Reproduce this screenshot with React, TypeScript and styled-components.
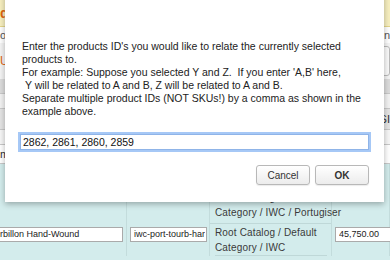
import React from "react";
import styled, { createGlobalStyle } from "styled-components";

const GlobalStyle = createGlobalStyle`
  html, body {
    margin: 0;
    padding: 0;
    background: #d3ecec;
    font-family: "Liberation Sans", Arial, sans-serif;
  }
  body {
    width: 390px;
    height: 260px;
    overflow: hidden;
  }
`;

const Page = styled.div`
  position: relative;
  width: 390px;
  height: 260px;
  overflow: hidden;
`;

const Backdrop = styled.div`
  display: flex;
  flex-direction: column;
`;

const Notice = styled.div`
  height: 26px;
  display: flex;
  align-items: center;
  justify-content: space-between;
  background: #f7efbf;
  border-bottom: 1px solid #e3d58a;
  color: #e0670f;
  font-weight: bold;
  font-size: 14px;
`;

const InfoRow = styled.div`
  height: 16px;
  display: flex;
  align-items: center;
  justify-content: space-between;
  background: #fff;
  color: #555;
  font-size: 11px;
`;

const ToolRow = styled.div`
  height: 36px;
  display: flex;
  align-items: center;
  justify-content: space-between;
  background: #f4f4f4;
  color: #e0670f;
  font-size: 12px;
`;

const ToolBox = styled.div`
  width: 30px;
  height: 28px;
  border: 1px solid #bbb;
  border-radius: 3px;
  background: #fafafa;
`;

const Stripe = styled.div<{ $tone: string; $h: number }>`
  height: ${(p) => p.$h}px;
  background: ${(p) => p.$tone};
  border-bottom: 1px solid #c8c8c8;
  display: flex;
  align-items: center;
  justify-content: flex-end;
  font-size: 11px;
  color: #333;
`;

const Grid = styled.div`
  display: grid;
  grid-template-columns: 127px 83px 122px 58px;
  background: #d3ecec;
`;

const Cell = styled.div<{ $pad?: string }>`
  border-right: 1px solid #c3dcdc;
  padding: ${(p) => p.$pad || "3px 4px"};
  font-size: 10px;
  letter-spacing: 0.15px;
  color: #3a3a3a;
  line-height: 15px;
  min-height: 16px;
  white-space: nowrap;
`;

const CellInput = styled.input<{ $w: number; $ml?: number }>`
  box-sizing: border-box;
  width: ${(p) => p.$w}px;
  height: 15px;
  margin-left: ${(p) => p.$ml || 0}px;
  border: 1px solid #aaa;
  padding: 0 1px 0 3px;
  font-family: "Liberation Sans", Arial, sans-serif;
  font-size: 9px;
  color: #222;
  background: #fff;
`;

const CategoryText = styled.div<{ $line?: boolean; $inset?: boolean }>`
  padding: ${(p) => (p.$inset ? "0" : "0 0 3px 5px")};
  margin: ${(p) => (p.$inset ? "0 4px 0 5px" : "0")};
  border-bottom: ${(p) => (p.$line ? "1px solid #bfd8d8" : "none")};

  &:first-child {
    padding-bottom: 0;
  }
`;

const Dialog = styled.div`
  position: absolute;
  left: 5px;
  top: -20px;
  width: 379px;
  height: 222px;
  box-sizing: border-box;
  background: #fff;
  box-shadow: 0 2px 6px rgba(0, 0, 0, 0.3);
  padding: 60px 15px 0 17px;
  display: flex;
  flex-direction: column;
`;

const Message = styled.p`
  margin: 0;
  font-size: 10.5px;
  line-height: 13px;
  color: #222;
  white-space: nowrap;
`;

const Field = styled.input`
  margin-top: 16px;
  margin-left: -2px;
  width: 349px;
  height: 16px;
  box-sizing: border-box;
  border: 1px solid #8fb4e8;
  outline: none;
  box-shadow: 0 0 0 2px #a6c8f6;
  padding: 0 2px;
  font-family: "Liberation Sans", Arial, sans-serif;
  font-size: 10.5px;
  color: #111;
`;

const Actions = styled.div`
  display: flex;
  justify-content: flex-end;
  gap: 5px;
  margin-top: 15px;
`;

const Button = styled.button<{ $primary?: boolean }>`
  width: 54px;
  height: 20px;
  border: 1px solid #b8b8b8;
  border-radius: 3px;
  background: linear-gradient(#ffffff, #ececec);
  box-shadow: 0 1px 1px rgba(0, 0, 0, 0.08);
  font-family: "Liberation Sans", Arial, sans-serif;
  font-size: 10px;
  font-weight: ${(p) => (p.$primary ? "bold" : "normal")};
  color: #333;
  padding: 0;
`;

export default function App() {
  return (
    <Page>
      <GlobalStyle />
      <Backdrop>
        <Notice>
          <span>d</span>
          <span />
        </Notice>
        <InfoRow>
          <span>oa</span>
          <span>n</span>
        </InfoRow>
        <ToolRow>
          <span>U</span>
          <ToolBox />
        </ToolRow>
        <Stripe $tone="#dcdcdc" $h={14} />
        <Stripe $tone="#f2f2f2" $h={14} />
        <Stripe $tone="#e4e4e4" $h={20}>
          SI
        </Stripe>
        <Stripe $tone="#f6f6f6" $h={14} />
        <Stripe $tone="#ffffff" $h={18}>
          <span style={{ marginRight: "auto" }}>m</span>
        </Stripe>
        <Grid>
          <Cell />
          <Cell />
          <Cell $pad="26px 0 0 0">
            <CategoryText>Root Catalog / Default</CategoryText>
            <CategoryText $line>Category / IWC / Portugiser</CategoryText>
          </Cell>
          <Cell />
          <Cell $pad="2px 4px 0 0">
            <CellInput $w={127} $ml={-4} defaultValue="rbillon Hand-Wound" />
          </Cell>
          <Cell $pad="2px 0 0 3px">
            <CellInput $w={77} defaultValue="iwc-port-tourb-har" />
          </Cell>
          <Cell $pad="1px 0 0 0">
            <CategoryText $inset>Root Catalog / Default</CategoryText>
            <CategoryText $inset $line>
              Category / IWC
            </CategoryText>
          </Cell>
          <Cell $pad="2px 0 0 3px">
            <CellInput $w={60} defaultValue="45,750.00" />
          </Cell>
        </Grid>
      </Backdrop>
      <Dialog>
        <Message>
          Enter the products ID's you would like to relate the currently selected
          <br />
          products to.
          <br />
          For example: Suppose you selected Y and Z.&nbsp; If you enter 'A,B' here,
          <br />
          &nbsp;Y will be related to A and B, Z will be related to A and B.
          <br />
          Separate multiple product IDs (NOT SKUs!) by a comma as shown in the
          <br />
          example above.
        </Message>
        <Field defaultValue="2862, 2861, 2860, 2859" autoFocus />
        <Actions>
          <Button>Cancel</Button>
          <Button $primary>OK</Button>
        </Actions>
      </Dialog>
    </Page>
  );
}
